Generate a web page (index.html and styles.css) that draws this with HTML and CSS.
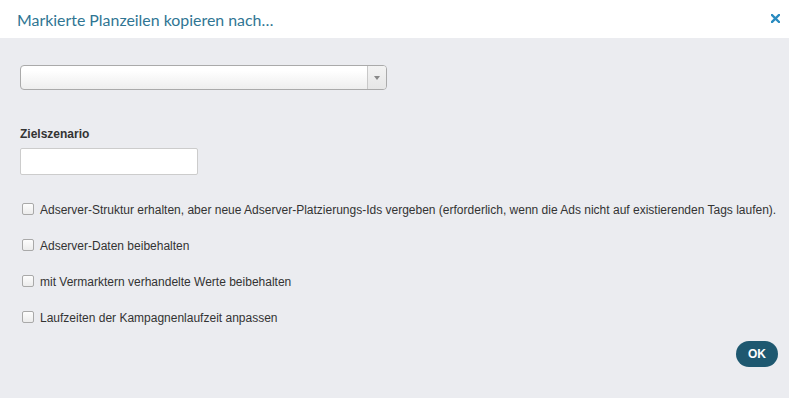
FILE: index.html
```html
<!DOCTYPE html>
<html lang="de">
<head>
<meta charset="utf-8">
<title>Markierte Planzeilen kopieren nach…</title>
<link rel="stylesheet" href="styles.css">
</head>
<body>
<div class="dialog">
  <header class="dialog-header">
    <h1 class="dialog-title">Markierte Planzeilen kopieren nach…</h1>
    <button class="close" aria-label="Schließen">
      <svg width="9" height="9" viewBox="0 0 9 9"><path d="M1 1L8 8M8 1L1 8" stroke="#2a8bc0" stroke-width="2.4" stroke-linecap="square"/></svg>
    </button>
  </header>
  <main class="dialog-body">
    <div class="select">
      <span class="select-value"></span>
      <span class="select-arrow"><span class="tri"></span></span>
    </div>
    <div class="field">
      <label class="field-label">Zielszenario</label>
      <input class="text-input" type="text">
    </div>
    <ul class="options">
      <li class="option"><span class="cb"></span><span>Adserver-Struktur erhalten, aber neue Adserver-Platzierungs-Ids vergeben (erforderlich, wenn die Ads nicht auf existierenden Tags laufen).</span></li>
      <li class="option"><span class="cb"></span><span>Adserver-Daten beibehalten</span></li>
      <li class="option"><span class="cb"></span><span>mit Vermarktern verhandelte Werte beibehalten</span></li>
      <li class="option"><span class="cb"></span><span>Laufzeiten der Kampagnenlaufzeit anpassen</span></li>
    </ul>
    <div class="actions">
      <button class="ok">OK</button>
    </div>
  </main>
</div>
</body>
</html>
```
FILE: styles.css
```css
html, body {
  margin: 0;
  padding: 0;
  background: #ebecf0;
}
.dialog {
  width: 789px;
  height: 398px;
  display: flex;
  flex-direction: column;
  font-family: "Liberation Sans", Arial, sans-serif;
}
.dialog-header {
  height: 38px;
  background: #fff;
  display: flex;
  align-items: center;
  justify-content: space-between;
  padding: 0 9px 0 17px;
  box-sizing: border-box;
}
.dialog-title {
  margin: 0;
  font-family: Lato, sans-serif;
  font-weight: 400;
  font-size: 15.9px;
  color: #2f7593;
}
.close {
  border: 0;
  background: none;
  padding: 0;
  width: 9px;
  height: 9px;
  display: flex;
  margin-top: -2px;
}
.dialog-body {
  flex: 1;
  padding: 27px 20px 0 20px;
  display: flex;
  flex-direction: column;
}
.select {
  width: 367px;
  height: 25px;
  box-sizing: border-box;
  border: 1px solid #aaa;
  border-radius: 4px;
  background: linear-gradient(#ffffff 20%, #eeeeee 100%);
  display: flex;
}
.select-value { flex: 1; }
.select-arrow {
  width: 18px;
  border-left: 1px solid #c8c8c8;
  display: flex;
  align-items: center;
  justify-content: center;
  background: linear-gradient(#f3f3f3, #e6e6e6);
  border-radius: 0 3px 3px 0;
}
.tri {
  width: 0;
  height: 0;
  border-left: 3px solid transparent;
  border-right: 3px solid transparent;
  border-top: 4px solid #888;
  margin-top: 1px;
}
.field {
  margin-top: 37px;
  display: flex;
  flex-direction: column;
}
.field-label {
  font-size: 12px;
  font-weight: 700;
  color: #333;
  line-height: 14px;
  margin-bottom: 7px;
}
.text-input {
  width: 178px;
  height: 27px;
  box-sizing: border-box;
  border: 1px solid #ccc;
  border-radius: 2px;
  background: #fff;
  margin: 0;
  padding: 0 4px;
}
.options {
  list-style: none;
  margin: 28px -20px 0 0;
  padding: 0;
  display: flex;
  flex-direction: column;
  gap: 22px;
}
.option {
  display: flex;
  align-items: center;
  gap: 6px;
  font-size: 12px;
  color: #333;
  line-height: 14px;
  height: 14px;
  padding-left: 2px;
  white-space: nowrap;
}
.cb {
  width: 10px;
  height: 10px;
  border: 1px solid #a9a9a9;
  border-radius: 2px;
  background: linear-gradient(#fdfdfd, #ececec);
  flex: none;
  margin-top: -2px;
}
.actions {
  display: flex;
  justify-content: flex-end;
  margin-top: 16px;
  margin-right: -9px;
}
.ok {
  width: 42px;
  height: 26px;
  border: 0;
  border-radius: 13px;
  background: #1e5870;
  color: #fff;
  font-family: "Liberation Sans", Arial, sans-serif;
  font-weight: 700;
  font-size: 12px;
  padding: 0;
}
```
